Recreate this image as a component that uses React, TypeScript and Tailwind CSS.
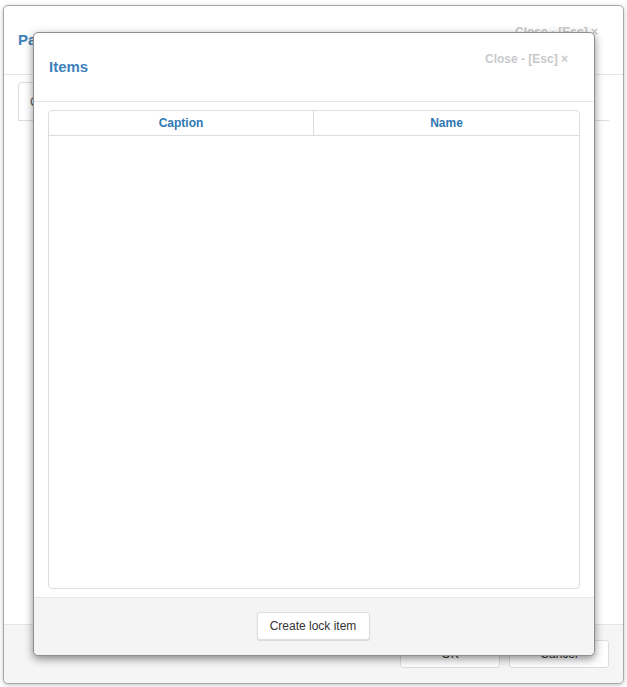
import React from "react";

function Header({ title, closeTop }: { title: string; closeTop: string }) {
  return (
    <div className="flex h-[69px] shrink-0 items-start justify-between border-b border-[#e5e5e5] pl-[15px] pr-[26px]">
      <div className="mb-[2px] self-center text-[15px] font-bold leading-none text-[#3d82ba]">{title}</div>
      <div className={`${closeTop} text-[12px] font-bold leading-none text-[#c9c9c9]`}>Close - [Esc] ×</div>
    </div>
  );
}

export default function App() {
  return (
    <div
      className="relative h-[687px] w-[627px] overflow-hidden bg-white"
      style={{ fontFamily: '"Liberation Sans", Arial, sans-serif' }}
    >
      {/* background dialog */}
      <div className="absolute left-[3px] top-[5px] flex h-[679px] w-[621px] flex-col rounded-[5px] border border-[#a8a8a8] bg-white shadow-[0_1px_4px_rgba(0,0,0,0.25)]">
        <div className="flex h-[69px] shrink-0 items-start justify-between border-b border-[#e5e5e5] pl-[14px] pr-[25px]">
          <div className="mb-[2px] self-center text-[15px] font-bold leading-none text-[#3d82ba]">Parameters</div>
          <div className="mt-[20px] text-[12px] font-bold leading-none text-[#c9c9c9]">Close - [Esc] ×</div>
        </div>
        <div className="flex-1 px-[14px] pt-[8px]">
          <div className="flex h-[38px] items-end border-b border-[#dddddd]">
            <div className="flex h-[38px] w-[90px] items-center rounded-t-[4px] border border-b-0 border-[#dddddd] bg-white pl-[11px] text-[12px] text-[#555]">
              Common
            </div>
          </div>
        </div>
        <div className="flex h-[59px] shrink-0 items-center justify-end gap-[9px] rounded-b-[5px] border-t border-[#e5e5e5] bg-[#f5f5f5] pr-[14px]">
          <button className="h-[28px] w-[100px] rounded-[3px] border border-[#dddddd] bg-white text-[12px] text-[#333]">OK</button>
          <button className="h-[28px] w-[100px] rounded-[3px] border border-[#dddddd] bg-white text-[12px] text-[#333]">Cancel</button>
        </div>
      </div>

      {/* foreground dialog */}
      <div className="absolute left-[33px] top-[32px] flex h-[624px] w-[562px] flex-col rounded-[5px] border border-[#8f8f8f] bg-white shadow-[0_3px_9px_rgba(0,0,0,0.45)]">
        <Header title="Items" closeTop="mt-[20px]" />
        <div className="flex flex-1 flex-col px-[14px] pb-[8px] pt-[8px]">
          <div className="flex flex-1 flex-col rounded-[4px] border border-[#dddddd]">
            <div className="grid h-[25px] grid-cols-[265px_1fr] border-b border-[#dddddd]">
              <div className="flex items-center justify-center border-r border-[#dddddd] text-[12px] font-bold text-[#2f78b3]">Caption</div>
              <div className="flex items-center justify-center text-[12px] font-bold text-[#2f78b3]">Name</div>
            </div>
            <div className="flex-1" />
          </div>
        </div>
        <div className="flex h-[58px] shrink-0 items-center justify-center rounded-b-[5px] border-t border-[#e5e5e5] bg-[#f4f4f4] pb-[2px]">
          <button className="h-[28px] w-[113px] -translate-x-[1px] rounded-[3px] border border-[#dddddd] bg-white text-[12px] text-[#333] shadow-[0_1px_1px_rgba(0,0,0,0.12)]">
            Create lock item
          </button>
        </div>
      </div>
    </div>
  );
}
